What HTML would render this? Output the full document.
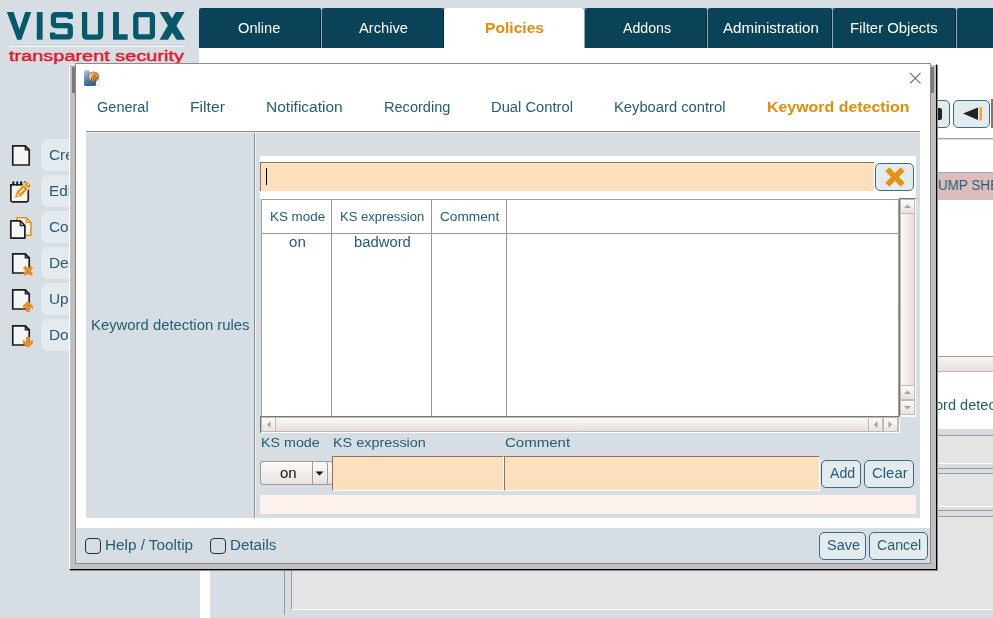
<!DOCTYPE html>
<html><head><meta charset="utf-8">
<style>
*{margin:0;padding:0;box-sizing:border-box;}
html,body{width:993px;height:618px;overflow:hidden;background:#d6dee4;font-family:"Liberation Sans",sans-serif;position:relative;}
.a{position:absolute;}
.t{position:absolute;white-space:nowrap;line-height:1;transform-origin:0 0;will-change:transform;}
.btn{position:absolute;background:#e4ebef;border:1.5px solid #3a6b80;border-radius:5px;}
.inp{position:absolute;background:#fce0bd;border-top:1px solid #8c7660;border-left:1px solid #8c7660;border-right:1px solid #fff;border-bottom:1px solid #fff;}
.sb{position:absolute;background:#e4eaee;border-radius:7px;}
</style></head><body>
<!-- logo -->
<svg class="a" style="left:0;top:0" width="200" height="70" viewBox="0 0 200 70">
<g fill="#05596a">
<polygon points="6.85,12.1 13.6,12.1 19.4,29.4 25.2,12.1 31.2,12.1 21.4,39.7 17.2,39.7"/>
<rect x="36.8" y="12.1" width="5.8" height="27.6"/>
<polygon points="113,12.1 118.9,12.1 118.9,34.2 127.7,34.2 127.7,39.7 113,39.7"/>
<polygon points="159.6,12.1 168,12.1 185,39.7 176.6,39.7"/>
<polygon points="175.7,12.1 184.6,12.1 168,39.7 159.6,39.7"/>
</g>
<g fill="none" stroke="#05596a" stroke-width="5.3" stroke-linejoin="round">
<path d="M70.3 19.1 V14.75 H55.9 Q53.45 14.75 53.45 17.2 V23.1 Q53.45 25.55 55.9 25.55 H67.85 Q70.3 25.55 70.3 28 V34.45 Q70.3 36.9 67.85 36.9 H52.6 V32.4"/>
<path d="M84.6 12.1 V34.45 Q84.6 37.05 87.2 37.05 H97.95 Q100.55 37.05 100.55 34.45 V12.1"/>
<rect x="135.8" y="14.65" width="16.6" height="22.3" rx="1.8"/>
</g>
<rect x="9" y="46" width="175.6" height="1" fill="#f5f8fa"/>
<text x="9" y="60.8" font-family="Liberation Sans" font-size="15.5" fill="#df1b2d" stroke="#df1b2d" stroke-width="0.45" textLength="175" lengthAdjust="spacingAndGlyphs">transparent security</text>
</svg>

<!-- nav -->
<div class="a" style="left:199px;top:8px;width:794px;height:40px;background:#8fa8b2"></div>
<div class="a" style="left:199px;top:8px;width:122px;height:40px;background:#0a4358;border-radius:3px 3px 0 0;border-right:1px solid #03283a"></div>
<div class="a" style="left:322px;top:8px;width:122px;height:40px;background:#0a4358;border-radius:3px 3px 0 0;border-right:1px solid #03283a"></div>
<div class="a" style="left:444px;top:8px;width:140px;height:40px;background:#ffffff;border-radius:3px 3px 0 0"></div>
<div class="a" style="left:585px;top:8px;width:122px;height:40px;background:#0a4358;border-radius:3px 3px 0 0;border-right:1px solid #03283a"></div>
<div class="a" style="left:708px;top:8px;width:124px;height:40px;background:#0a4358;border-radius:3px 3px 0 0;border-right:1px solid #03283a"></div>
<div class="a" style="left:833px;top:8px;width:123px;height:40px;background:#0a4358;border-radius:3px 3px 0 0;border-right:1px solid #03283a"></div>
<div class="a" style="left:957px;top:8px;width:40px;height:40px;background:#0a4358;border-radius:3px 3px 0 0"></div>

<!-- main white area -->
<div class="a" style="left:199px;top:48px;width:794px;height:570px;background:#ffffff"></div>

<!-- behind-dialog right -->
<div class="btn" style="left:920px;top:99.5px;width:30px;height:28px"></div>
<div class="a" style="left:937px;top:108px;width:4.5px;height:12px;background:#222;border-radius:0 2px 2px 0"></div>
<div class="btn" style="left:953px;top:99.5px;width:37px;height:28px"></div>
<svg class="a" style="left:953px;top:99px" width="40" height="30"><polygon points="10,14.5 25,8.5 25,21" fill="#222"/><rect x="26.6" y="8" width="2.3" height="13.5" fill="#f4a21e"/></svg>
<div class="a" style="left:991px;top:99px;width:2px;height:29px;background:#8c7660"></div>
<div class="a" style="left:937px;top:138px;width:56px;height:1px;background:#9aa0a3"></div>
<div class="a" style="left:937px;top:139px;width:56px;height:1px;background:#dde3e6"></div>
<div class="a" style="left:937px;top:172px;width:56px;height:28px;background:#dcbdbe;border-top:1px solid #a8a8a8"></div>
<div class="a" style="left:937px;top:356px;width:56px;height:1px;background:#9aa0a3"></div>
<div class="a" style="left:937px;top:357px;width:56px;height:15px;background:linear-gradient(#f8f5f3,#e6dedb);border-bottom:1px solid #c9b7ae"></div>
<div class="a" style="left:937px;top:429px;width:56px;height:189px;background:#d6dee4"></div>
<div class="a" style="left:937px;top:435px;width:56px;height:1px;background:#9a9a9a"></div>
<div class="a" style="left:937px;top:436px;width:56px;height:27px;background:#e4e4e4"></div>
<div class="a" style="left:937px;top:463px;width:56px;height:1px;background:#fff"></div>
<div class="a" style="left:937px;top:468px;width:56px;height:1px;background:#9a9a9a"></div>
<div class="a" style="left:937px;top:473px;width:56px;height:1px;background:#9a9a9a"></div>
<div class="a" style="left:937px;top:474px;width:56px;height:32px;background:#e4e4e4"></div>
<div class="a" style="left:937px;top:506px;width:56px;height:1px;background:#fff"></div>
<div class="a" style="left:937px;top:510px;width:56px;height:1px;background:#9a9a9a"></div>
<div class="a" style="left:937px;top:516px;width:56px;height:1px;background:#9a9a9a"></div>

<!-- bottom behind -->
<div class="a" style="left:199px;top:570px;width:1px;height:48px;background:#d6dee4"></div>
<div class="a" style="left:210px;top:570px;width:783px;height:48px;background:#d6dee4"></div>
<div class="a" style="left:284px;top:570px;width:1px;height:45px;background:#9a9a9a"></div>
<div class="a" style="left:291px;top:517px;width:702px;height:93px;background:#e4e4e4;border-left:1px solid #9a9a9a;border-bottom:1px solid #fff"></div>

<!-- sidebar buttons -->
<div class="sb" style="left:41px;top:139px;width:60px;height:32px"></div>
<div class="sb" style="left:41px;top:175px;width:60px;height:32px"></div>
<div class="sb" style="left:41px;top:211px;width:60px;height:32px"></div>
<div class="sb" style="left:41px;top:247px;width:60px;height:32px"></div>
<div class="sb" style="left:41px;top:283px;width:60px;height:32px"></div>
<div class="sb" style="left:41px;top:319px;width:60px;height:32px"></div>
<!-- sidebar icons -->
<svg class="a" style="left:0;top:135px" width="40" height="220" viewBox="0 0 40 220">
<g stroke="#1e1e1e" stroke-width="1.7" fill="#f5f5f5" stroke-linejoin="miter">
<path d="M12.75 10.85 H25.3 L29.2 14.75 V30 H12.75 Z"/>

<path d="M12.75 118.95 H25.3 L29.2 122.85 V138 H12.75 Z"/>
<path d="M12.75 154.95 H25.3 L29.2 158.85 V174 H12.75 Z"/>
<path d="M12.75 190.95 H25.3 L29.2 194.85 V210 H12.75 Z"/>
</g>
<g fill="#b0b0b0" stroke="#1e1e1e" stroke-width="1.3"><path d="M25.3 11.3 L28.8 14.8 H25.3 Z"/><path d="M25.3 119.4 L28.8 122.9 H25.3 Z"/><path d="M25.3 155.4 L28.8 158.9 H25.3 Z"/><path d="M25.3 191.4 L28.8 194.9 H25.3 Z"/></g>
<!-- edit -->
<path d="M10.85 49.75 H28.25 V65.3 Q28.25 66.85 26.7 66.85 H12.4 Q10.85 66.85 10.85 65.3 Z" fill="#f5f5f5" stroke="#1e1e1e" stroke-width="1.7"/>
<g fill="#1e1e1e"><rect x="12.3" y="46.2" width="2" height="4.6" rx="1"/><rect x="16.2" y="46.2" width="2" height="4.6" rx="1"/><rect x="20" y="46.2" width="2.2" height="4.6" rx="1"/><rect x="23.9" y="46.2" width="2" height="4.6" rx="1"/></g>
<g stroke="#eef1f3" stroke-width="1.6" stroke-linejoin="round" fill="#eef1f3">
<polygon points="16.8,56.6 23.6,49.8 27.9,54.1 21.1,60.9 14.8,62.7"/>
<polygon points="24.24,49.16 27.06,46.34 31.36,50.64 28.54,53.46"/>
</g>
<g fill="#e3940f">
<polygon points="16.8,56.6 23.6,49.8 27.9,54.1 21.1,60.9"/>
<polygon points="16.8,56.6 21.1,60.9 14.8,62.7"/>
<polygon points="24.24,49.16 27.06,46.34 31.36,50.64 28.54,53.46"/>
</g>
<path d="M19.6 57.9 L23.9 53.6" stroke="#fff" stroke-width="1.5"/>
<polygon points="17.7,58.6 19.3,60.2 16.7,61" fill="#fff"/>
<rect x="27.3" y="48.6" width="1.4" height="1.4" fill="#fff" transform="rotate(45 28 49.3)"/>
<!-- copy icon -->
<path d="M17 82.7 H26.3 L31 87.4 V100.2 H17 Z" fill="#f5f5f5" stroke="#e8960e" stroke-width="1.6" stroke-linejoin="round"/>
<path d="M26.3 83.2 V87.4 H30.5" fill="none" stroke="#e8960e" stroke-width="1.3"/>
<path d="M10.8 85.9 H20.3 L24.9 90.5 V103.1 H10.8 Z" fill="#f5f5f5" stroke="#1e1e1e" stroke-width="1.7" stroke-linejoin="round"/>
<path d="M20.3 86.3 V90.5 H24.5" fill="none" stroke="#1e1e1e" stroke-width="1.3"/>
<!-- delete x -->
<g stroke="#e58f2a" stroke-width="3.5" stroke-linecap="butt"><path d="M24.1 132 L31.9 139.8 M31.9 132 L24.1 139.8"/></g>
<!-- upload arrow -->
<polygon points="27.9,165.9 32.9,170.7 32.9,174.6 29.9,171.7 29.9,176.9 26,176.9 26,171.7 22.9,174.6 22.9,170.7" fill="#e58f2a"/>
<!-- download arrow -->
<polygon points="26,202 29.9,202 29.9,207.2 32.9,204.3 32.9,208.2 27.9,213 22.9,208.2 22.9,204.3 26,207.2" fill="#e58f2a"/>
</svg>

<div class="t" style="left:238.15px;top:21px;font-size:14px;color:#ffffff;transform:scaleX(1.0462)">Online</div>
<div class="t" style="left:359.00px;top:21px;font-size:14px;color:#ffffff;transform:scaleX(1.0500)">Archive</div>
<div class="t" style="left:484.88px;top:21px;font-size:14px;color:#e08e0b;font-weight:bold;transform:scaleX(1.1154)">Policies</div>
<div class="t" style="left:622.50px;top:21px;font-size:14px;color:#ffffff;transform:scaleX(1.0106)">Addons</div>
<div class="t" style="left:723.00px;top:21px;font-size:14px;color:#ffffff;transform:scaleX(1.0818)">Administration</div>
<div class="t" style="left:849.64px;top:21px;font-size:14px;color:#ffffff;transform:scaleX(1.0642)">Filter Objects</div>
<div class="t" style="left:48.90px;top:148px;font-size:14px;color:#245c73;transform:scaleX(1.1000)">Create</div>
<div class="t" style="left:48.90px;top:184px;font-size:14px;color:#245c73;transform:scaleX(1.1000)">Edit</div>
<div class="t" style="left:48.90px;top:220px;font-size:14px;color:#245c73;transform:scaleX(1.1000)">Copy</div>
<div class="t" style="left:48.90px;top:256px;font-size:14px;color:#245c73;transform:scaleX(1.1000)">Delete</div>
<div class="t" style="left:48.90px;top:292px;font-size:14px;color:#245c73;transform:scaleX(1.1000)">Upload</div>
<div class="t" style="left:48.90px;top:328px;font-size:14px;color:#245c73;transform:scaleX(1.1000)">Download</div>
<div class="t" style="left:938.34px;top:178px;font-size:14px;color:#245c73;transform:scaleX(0.9600)">UMP SHEET</div>
<div class="t" style="left:934.96px;top:398px;font-size:14px;color:#245c73;transform:scaleX(1.0400)">ord detection</div>

<!-- DIALOG frame -->
<div class="a" style="left:69px;top:64px;width:868px;height:506px;background:#c0c0c0;border-left:1px solid #fff;border-top:1px solid #fff;border-right:1px solid #000;border-bottom:1px solid #000;box-shadow:1px 1px 0 #8a8a8a"></div>
<div class="a" style="left:72px;top:67px;width:3px;height:26px;background:#7a7a7a"></div>
<div class="a" style="left:931px;top:67px;width:3px;height:26px;background:#7a7a7a"></div>
<div class="a" style="left:75px;top:63px;width:856px;height:501px;background:#ffffff;border:1px solid #8a8a8a"></div>

<!-- title icon -->
<svg class="a" style="left:83px;top:69px" width="19" height="19" viewBox="0 0 19 19">
<defs><linearGradient id="gb" x1="0" y1="0" x2="0.3" y2="1"><stop offset="0" stop-color="#b4d2ee"/><stop offset="0.45" stop-color="#6d98c6"/><stop offset="1" stop-color="#335f95"/></linearGradient>
<radialGradient id="go" cx="0.3" cy="0.45" r="0.75"><stop offset="0" stop-color="#fff2d8"/><stop offset="0.35" stop-color="#fbb04a"/><stop offset="0.8" stop-color="#ee8a1c"/><stop offset="1" stop-color="#c8600c"/></radialGradient></defs>
<rect x="10" y="3" width="7" height="14" rx="1.5" fill="#eef1f4" stroke="#e2e6ea" stroke-width="0.6"/>
<path d="M1 3 Q1 1 3 1 H5 Q6.5 1 7 3 L7.5 4 H12 Q13 4 13 5 V15.5 Q13 17 11.5 17 H2.5 Q1 17 1 15.5 Z" fill="url(#gb)"/>
<circle cx="10.5" cy="7.8" r="5.4" fill="#3a68a0"/>
<circle cx="10.5" cy="7.8" r="4.9" fill="url(#go)"/>
<g stroke="#4a3a3a" stroke-width="0.85" fill="none" stroke-linecap="round"><path d="M8.3 12 V9.6 Q8.3 6.8 11.5 5.6"/><path d="M10.3 12.3 V10 Q10.3 8 12.6 7.2"/><path d="M12.3 12 V10.6 Q12.3 9.5 13.8 9"/></g>
</svg>
<!-- close x -->
<svg class="a" style="left:908px;top:71px" width="14" height="14"><path d="M2 2 L12.5 12.5 M12.5 2 L2 12.5" stroke="#7a7a7a" stroke-width="1.1"/></svg>

<!-- content panel -->
<div class="a" style="left:86px;top:131px;width:834px;height:387px;background:#d6dee4;border-top:1px solid #8a8a8a"></div>
<div class="a" style="left:86px;top:132px;width:834px;height:1px;background:#e9edf0"></div>
<div class="a" style="left:254px;top:133px;width:1px;height:385px;background:#8f8f8f"></div>
<div class="a" style="left:255px;top:133px;width:1px;height:385px;background:#eef1f3"></div>

<!-- search row -->
<div class="a" style="left:260px;top:156px;width:656px;height:43px;background:#ffffff"></div>
<div class="inp" style="left:260px;top:162px;width:614px;height:29px;border-bottom:0;border-right:0"></div>
<div class="a" style="left:266px;top:168px;width:1px;height:17px;background:#000"></div>
<div class="btn" style="left:875px;top:163px;width:39px;height:28px"></div>
<svg class="a" style="left:883px;top:165px" width="24" height="24"><path d="M4.3 4.3 L19.7 19.7 M19.7 4.3 L4.3 19.7" stroke="#e39211" stroke-width="5.6" stroke-linecap="butt"/></svg>

<!-- scroll pane -->
<div class="a" style="left:261px;top:199px;width:638px;height:218px;background:#fff;border:1px solid #a0a0a0"></div>
<div class="a" style="left:262px;top:233px;width:636px;height:1px;background:#9a9a9a"></div>
<div class="a" style="left:331px;top:200px;width:1px;height:216px;background:#9a9a9a"></div>
<div class="a" style="left:431px;top:200px;width:1px;height:216px;background:#9a9a9a"></div>
<div class="a" style="left:506px;top:200px;width:1px;height:216px;background:#9a9a9a"></div>
<!-- vscroll -->
<div class="a" style="left:899px;top:198px;width:17px;height:219px;background:#fff;border-top:1px solid #707a80;border-left:1px solid #707a80"></div>
<div class="a" style="left:900px;top:199px;width:15px;height:216px;background:linear-gradient(90deg,#fbfaf9,#e6dedA);border:1px solid #c9b8ae"></div>
<div class="a" style="left:900px;top:199px;width:15px;height:15px;background:linear-gradient(#fdfcfb,#e9e2de);border:1px solid #c9b8ae"></div>
<div class="a" style="left:900px;top:385px;width:15px;height:15px;background:linear-gradient(#fdfcfb,#e9e2de);border:1px solid #c9b8ae"></div>
<div class="a" style="left:900px;top:400px;width:15px;height:15px;background:linear-gradient(#fdfcfb,#e9e2de);border:1px solid #c9b8ae"></div>
<svg class="a" style="left:900px;top:199px" width="16" height="218"><g fill="#a3a3a3"><polygon points="4,9 7.5,5.5 11,9"/><polygon points="4,195 7.5,191.5 11,195"/><polygon points="4,207 7.5,210.5 11,207"/></g></svg>
<!-- hscroll -->
<div class="a" style="left:260px;top:416px;width:640px;height:17px;background:#fff;border-top:1px solid #707a80;border-left:1px solid #707a80"></div>
<div class="a" style="left:261px;top:417px;width:638px;height:15px;background:linear-gradient(#fbfaf9,#e6deda);border:1px solid #c9b8ae"></div>
<div class="a" style="left:261px;top:417px;width:15px;height:15px;background:linear-gradient(#fdfcfb,#e9e2de);border:1px solid #c9b8ae"></div>
<div class="a" style="left:868px;top:417px;width:15px;height:15px;background:linear-gradient(#fdfcfb,#e9e2de);border:1px solid #c9b8ae"></div>
<div class="a" style="left:883px;top:417px;width:15px;height:15px;background:linear-gradient(#fdfcfb,#e9e2de);border:1px solid #c9b8ae"></div>
<svg class="a" style="left:261px;top:417px" width="640" height="15"><g fill="#a3a3a3"><polygon points="9.5,4 6,7.5 9.5,11"/><polygon points="616.5,4 613,7.5 616.5,11"/><polygon points="627.5,4 631,7.5 627.5,11"/></g></svg>

<!-- form row -->
<div class="a" style="left:260px;top:461px;width:73px;height:24px;background:linear-gradient(#fbfaf9,#e8e3df);border:1px solid #a59a92;border-radius:3px"></div>
<div class="a" style="left:260px;top:461px;width:68px;height:24px;background:linear-gradient(#fbfaf9,#e8e3df);border:1px solid #a59a92;border-radius:3px"></div>
<div class="a" style="left:312px;top:462px;width:1px;height:22px;background:#a59a92"></div>
<svg class="a" style="left:313px;top:468.5px" width="14" height="10"><polygon points="2.5,2.5 10.5,2.5 6.5,6.5" fill="#111"/></svg>
<div class="inp" style="left:332px;top:456px;width:172px;height:35px"></div>
<div class="inp" style="left:504px;top:456px;width:316px;height:35px"></div>
<div class="btn" style="left:821px;top:460px;width:40px;height:28px"></div>
<div class="btn" style="left:864px;top:460px;width:50px;height:28px"></div>
<div class="a" style="left:260px;top:495px;width:656px;height:19px;background:#fdf2ee"></div>

<!-- footer -->
<div class="a" style="left:76px;top:528px;width:854px;height:35px;background:#d6dee4"></div>
<div class="a" style="left:85px;top:538px;width:16px;height:16px;border:1.6px solid #2e2e2e;border-radius:4px"></div>
<div class="a" style="left:210px;top:538px;width:16px;height:16px;border:1.6px solid #2e2e2e;border-radius:4px"></div>
<div class="btn" style="left:819px;top:532px;width:47px;height:28px"></div>
<div class="btn" style="left:869px;top:532px;width:59px;height:28px"></div>

<div class="t" style="left:96.76px;top:100px;font-size:14px;color:#245c73;transform:scaleX(1.0375)">General</div>
<div class="t" style="left:190.18px;top:100px;font-size:14px;color:#245c73;transform:scaleX(1.1233)">Filter</div>
<div class="t" style="left:265.89px;top:100px;font-size:14px;color:#245c73;transform:scaleX(1.1074)">Notification</div>
<div class="t" style="left:383.66px;top:100px;font-size:14px;color:#245c73;transform:scaleX(1.0403)">Recording</div>
<div class="t" style="left:491.15px;top:100px;font-size:14px;color:#245c73;transform:scaleX(1.0526)">Dual Control</div>
<div class="t" style="left:614.15px;top:100px;font-size:14px;color:#245c73;transform:scaleX(1.0529)">Keyboard control</div>
<div class="t" style="left:767.16px;top:100px;font-size:14px;color:#e08e0b;font-weight:bold;transform:scaleX(1.1379)">Keyword detection</div>
<div class="t" style="left:91.14px;top:318px;font-size:14px;color:#245c73;transform:scaleX(1.0608)">Keyword detection rules</div>
<div class="t" style="left:269.58px;top:211px;font-size:12px;color:#245c73;transform:scaleX(1.1167)">KS mode</div>
<div class="t" style="left:340.01px;top:211px;font-size:12px;color:#245c73;transform:scaleX(1.0882)">KS expression</div>
<div class="t" style="left:439.66px;top:211px;font-size:12px;color:#245c73;transform:scaleX(1.1392)">Comment</div>
<div class="t" style="left:289.22px;top:235px;font-size:14px;color:#245c73;transform:scaleX(1.0786)">on</div>
<div class="t" style="left:354.14px;top:235px;font-size:14px;color:#245c73;transform:scaleX(1.0577)">badword</div>
<div class="t" style="left:261.10px;top:436px;font-size:13px;color:#245c73;transform:scaleX(1.0981)">KS mode</div>
<div class="t" style="left:333.29px;top:436px;font-size:13px;color:#245c73;transform:scaleX(1.1073)">KS expression</div>
<div class="t" style="left:505.04px;top:436px;font-size:13px;color:#245c73;transform:scaleX(1.1564)">Comment</div>
<div class="t" style="left:280.13px;top:466px;font-size:14px;color:#111111;transform:scaleX(1.0714)">on</div>
<div class="t" style="left:830.00px;top:466px;font-size:14px;color:#245c73;transform:scaleX(1.0083)">Add</div>
<div class="t" style="left:872.23px;top:466px;font-size:14px;color:#245c73;transform:scaleX(1.0656)">Clear</div>
<div class="t" style="left:105.01px;top:538px;font-size:14px;color:#245c73;transform:scaleX(1.0911)">Help / Tooltip</div>
<div class="t" style="left:230.12px;top:538px;font-size:14px;color:#245c73;transform:scaleX(1.0829)">Details</div>
<div class="t" style="left:827.37px;top:538px;font-size:14px;color:#245c73;transform:scaleX(1.0333)">Save</div>
<div class="t" style="left:877.09px;top:538px;font-size:14px;color:#245c73;transform:scaleX(1.0143)">Cancel</div>
</body></html>
